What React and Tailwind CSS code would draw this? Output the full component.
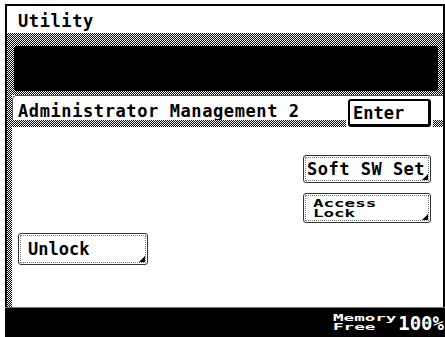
import React from "react";

const dither = "bg-[repeating-conic-gradient(#000_0_25%,#fff_0_50%)] bg-size-[2px_2px]";

function PanelButton({ children, className }) {
    return (
        <button
            className={
                "relative bg-white border border-[#333] rounded-[3px] outline-1 outline-dotted outline-[#777] -outline-offset-[3px] text-left " +
                className
            }
        >
            {children}
            {/* corner mark */}
            <span className="absolute right-[2px] bottom-[2px] w-0 h-0 border-l-[6px] border-l-transparent border-b-[6px] border-b-black" />
        </button>
    );
}

export default function App() {
    return (
        <div className="w-[445px] h-[337px] bg-white pt-[4px] pl-[5px] font-['DejaVu_Sans_Mono',monospace] font-bold text-black overflow-hidden">
            <div className="w-[440px] h-[333px] border-2 border-b-0 border-black flex flex-col">
                {/* title */}
                <div className="h-[27px] pl-[11px] pt-[4px] flex items-center text-[17px] tracking-[0.6px] leading-none">
                    Utility
                </div>

                {/* message area */}
                <div className={"h-[62px] pt-[13px] pb-[4px] pl-[7px] pr-[5px] " + dither}>
                    <div className="h-[45px] bg-black rounded-[3px]" />
                </div>

                {/* body */}
                <div className="h-[212px] flex">
                    <div className={"w-[5px] " + dither} />
                    <div className="flex-1 flex flex-col">
                        <div className="h-[25px] flex justify-between items-start bg-white border-t border-l border-[#555] rounded-tl-[5px]">
                            <span className="pl-[5px] pt-[7px] text-[17px] tracking-[0.6px] leading-[17px]">
                                Administrator Management 2
                            </span>
                            <button className="relative z-10 mt-[3px] mr-[12px] w-[83px] h-[28px] -mb-[6px] bg-white border-2 border-r-[3px] border-b-[3px] border-black rounded-[3px] shadow-[0_0_0_2px_#fff] text-left pl-[3px] pt-[2px] text-[17px] leading-none">
                                Enter
                            </button>
                        </div>
                        <div className={"h-[7px] " + dither} />
                        <div className="flex-1 bg-white flex flex-col pt-[28px] gap-[10px]">
                            <div className="flex flex-col items-end gap-[10px] pr-[12px]">
                                <PanelButton className="w-[128px] h-[28px] pl-[3px] text-[17px] tracking-[0.5px] leading-none">
                                    Soft SW Set
                                </PanelButton>
                                <PanelButton className="w-[128px] h-[30px] pl-[9px] pt-[1px]">
                                    <span className="block w-[40px] origin-left scale-x-[1.75] text-[10px] leading-[10px]">
                                        Access<br />Lock
                                    </span>
                                </PanelButton>
                            </div>
                            <div className="pl-[6px]">
                                <PanelButton className="w-[130px] h-[32px] pl-[9px] text-[17px] leading-none">
                                    Unlock
                                </PanelButton>
                            </div>
                        </div>
                    </div>
                </div>

                {/* status bar */}
                <div className="h-[30px] -ml-[2px] -mr-[2px] bg-black border-t border-[#777] flex justify-end items-center pr-[1px] text-white">
                    <span className="block w-[65px] pt-[1px]">
                        <span className="block w-[34px] origin-left scale-x-[1.95] text-[9px] leading-[9px]">
                            Memory<br />Free
                        </span>
                    </span>
                    <span className="text-[19px] leading-none pt-[2px]">100%</span>
                </div>
            </div>
        </div>
    );
}
